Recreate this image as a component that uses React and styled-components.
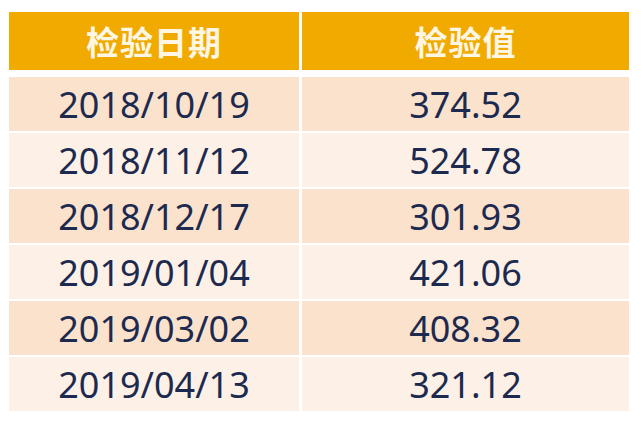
import React from "react";
import styled, { createGlobalStyle } from "styled-components";

const GlobalStyle = createGlobalStyle`
  html, body {
    margin: 0;
    padding: 0;
    background: #ffffff;
  }
`;

const Page = styled.div`
  padding: 12px 0 0 9px;
  font-family: "Noto Sans", "Noto Sans CJK SC", sans-serif;
`;

const Table = styled.div`
  display: grid;
  grid-template-columns: 290px 327px;
  column-gap: 3px;
  row-gap: 2px;
  width: 620px;
`;

const HeadCell = styled.div`
  display: flex;
  align-items: center;
  justify-content: center;
  height: 58px;
  margin-bottom: 5px;
  background: #f0aa00;
  color: #fff6e4;
  font-family: "Noto Sans CJK SC", sans-serif;
  font-weight: 700;
  font-size: 33px;
  letter-spacing: 1px;
`;

const Cell = styled.div`
  display: flex;
  align-items: center;
  justify-content: center;
  height: 54px;
  background: ${(p) => (p.$odd ? "#fbe2cd" : "#fdf1e7")};
  color: #1d2a4f;
  font-size: 36px;
  line-height: 1;
  padding-top: 1px;
  box-sizing: border-box;
`;

const rows = [
  ["2018/10/19", "374.52"],
  ["2018/11/12", "524.78"],
  ["2018/12/17", "301.93"],
  ["2019/01/04", "421.06"],
  ["2019/03/02", "408.32"],
  ["2019/04/13", "321.12"],
];

const App = () => (
  <Page>
    <GlobalStyle />
    <Table>
      <HeadCell>检验日期</HeadCell>
      <HeadCell>检验值</HeadCell>
      {rows.map(([date, value], i) => (
        <React.Fragment key={date}>
          <Cell $odd={i % 2 === 0}>{date}</Cell>
          <Cell $odd={i % 2 === 0}>{value}</Cell>
        </React.Fragment>
      ))}
    </Table>
  </Page>
);

export default App;
